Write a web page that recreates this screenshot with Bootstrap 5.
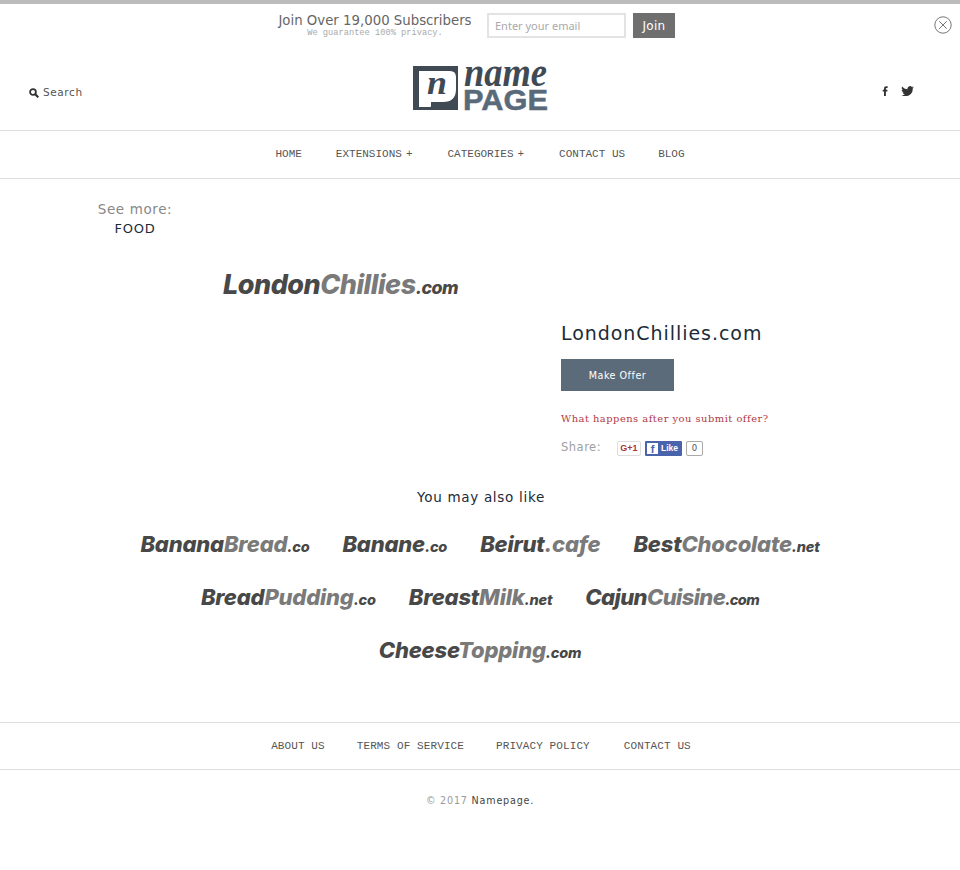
<!DOCTYPE html>
<html lang="en"><head><meta charset="utf-8"><title>LondonChillies.com</title>
<link rel="stylesheet" href="https://cdn.jsdelivr.net/npm/bootstrap@5.3.0/dist/css/bootstrap.min.css">
<style>
body{font-family:"DejaVu Sans",sans-serif;color:#1c2b39;background:#fff;height:870px;overflow:hidden}
.topline{height:4px;background:#bcbcbc}
.subbar{height:38px;padding:9px 7px 0 0;position:relative}
.subtext{width:194px;margin-right:15px;text-align:center}
.subhead{font-size:13.3px;line-height:16px;color:#666;white-space:nowrap}
.subnote{font-family:"Liberation Mono",monospace;font-size:8.7px;line-height:9px;color:#aaa;white-space:nowrap}
.subinput{width:139px;height:25px;border:2px solid #e3e3e3;font:11px/19px "Noto Sans",sans-serif;color:#999;padding:0 6px;margin-right:7px;display:flex;align-items:center;background:#fff}
.subinput::placeholder{color:#aaa}
.subbtn{width:42px;height:25px;background:#6f6f6f;color:#fff;font-size:12px;border:0;border-radius:0;padding:0;letter-spacing:.3px}
.closer{position:absolute;right:8px;top:12px;width:18px;height:18px}
.headrow{height:88px;padding:14px 29px 0 29px}
.srch{font-size:10.5px;letter-spacing:.6px;color:#555;width:130px}
.socials{width:130px;padding-right:17px;margin-bottom:4px}
.brand{width:136px;height:96px;margin-top:-35px;margin-bottom:-25px}
.mainnav{height:49px;border-top:1px solid #ddd;border-bottom:1px solid #ddd}
.mono{font-family:"Liberation Mono",monospace;font-size:11px;color:#555;text-decoration:none;white-space:nowrap}
.plusmark{margin-left:4px}
.mainnav a:nth-child(1){margin-right:34px}
.mainnav a:nth-child(2),.mainnav a:nth-child(3){margin-right:35px}
.mainnav a:nth-child(4){margin-right:33px}
.footnav{padding-left:2px}
.footnav .mono{letter-spacing:.1px}
.footnav a:nth-child(1),.footnav a:nth-child(2){margin-right:32px}
.footnav a:nth-child(3){margin-right:34px}
.seemore{width:76px;margin:21px 0 0 97px;text-align:center}
.seelabel{font-size:13.5px;line-height:19px;color:#888;letter-spacing:.6px;white-space:nowrap}
.seefood{font-size:13px;line-height:20px;color:#1c2b39;letter-spacing:.7px}
.mainrow{height:231px}
.leftlogo{width:561px;padding:32px 0 0 223px}
.lchead{font-size:19px;line-height:24px;letter-spacing:.95px;margin:82px 0 14px;color:#1c2b39}
.offerbtn{width:113px;height:32px;background:#5c6b79;color:#fff;font-size:9.6px;letter-spacing:.5px;border:0;border-radius:0;padding:3px 0 0;display:block}
.whatlink{font-family:"DejaVu Serif",serif;font-size:9.9px;color:#b13a3f;text-decoration:none;letter-spacing:.5px;display:block;margin-top:21px;line-height:14px}
.sharerow{margin-top:14px;height:16px}
.sharelabel{font-size:11.5px;color:#a0a0a0;letter-spacing:.5px;width:56px}
.gplus{width:24px;height:15px;border:1px solid #ddd;border-radius:2px;font:700 9px/13px "Liberation Sans",sans-serif;color:#a33;text-align:center;margin-right:4px}
.fblike{width:37px;height:15px;background:#4a63ad;border-radius:1px;color:#fff;font:700 8.5px/14px "Liberation Sans",sans-serif;gap:3px;padding-left:2px}
.ff{width:11px;height:11px;background:#fff;color:#4a63ad;font:700 11px/12px "Liberation Sans",sans-serif;text-align:center;display:block}
.fbcount{width:17px;height:15px;border:1px solid #aaa;border-radius:2px;font-size:8.5px;line-height:13px;text-align:center;color:#555;margin-left:4px}
.alsolike{font-size:13.5px;line-height:18px;letter-spacing:.7px;text-align:center;margin:18px 0 0;padding-left:2px;color:#1c2b39;font-weight:400}
.wordmark{font-family:"Inter",sans-serif;font-weight:800;font-style:italic;line-height:28px;white-space:nowrap;color:#484848;text-decoration:none;display:block}
.wordmark span{color:#7a7a7a}
.wordmark small{font-size:.66em;color:#484848;font-weight:800}
.bigmark{font-size:27px;letter-spacing:-.5px}
.lgmark{font-size:22px;letter-spacing:-.2px}
.cjmark{letter-spacing:-.6px}
.logorow{height:53px;gap:33px}
.logos{margin-top:24px;height:192px}
.footnav{height:48px;border-top:1px solid #ddd;border-bottom:1px solid #ddd}
.copy{font-size:9.6px;color:#999;letter-spacing:.8px;text-align:center;margin-top:24px;line-height:14px}
.copy a{color:#444;text-decoration:none}
</style></head><body>
<div class="topline"></div>
<div class="subbar d-flex justify-content-center align-items-start">
 <div class="subtext"><div class="subhead">Join Over 19,000 Subscribers</div><div class="subnote">We guarantee 100% privacy.</div></div>
 <input class="subinput" type="text" placeholder="Enter your email" aria-label="Email">
 <button class="btn subbtn">Join</button>
 <svg class="closer" viewBox="0 0 18 18" fill="none" stroke="#777"><circle cx="9" cy="9" r="8.2"/><path d="M5.2 5.2l7.6 7.6M12.8 5.2l-7.6 7.6"/></svg>
</div>
<div class="headrow d-flex justify-content-between align-items-center">
 <div class="srch d-flex align-items-center"><svg width="10" height="10" viewBox="0 0 10 10" fill="none" stroke="#333" stroke-width="1.8" class="me-1"><circle cx="4" cy="4" r="2.9"/><path d="M6.2 6.2L9.3 9.3" stroke-width="2.2"/></svg>Search</div>
 <svg class="brand" viewBox="0 -25 136 96" role="img" aria-label="name PAGE">
  <path fill="#3f4a55" d="M1 1h45v44H1z"/>
  <path fill="#fff" d="M7 6h31q6 0 6 6v12q0 13-13 13H19v4q0 1-1 1H7z"/>
  <text x="15" y="29" font-family="Liberation Serif" font-style="italic" font-weight="700" font-size="34" fill="#3f4a55" textLength="20" lengthAdjust="spacingAndGlyphs">n</text>
  <text x="52" y="21" font-family="Liberation Serif" font-style="italic" font-weight="700" font-size="40" fill="#3f4a55" textLength="83" lengthAdjust="spacingAndGlyphs">name</text>
  <text x="51" y="44.500" font-family="Liberation Sans" font-weight="700" font-size="30" fill="#596b7b" stroke="#596b7b" stroke-width=".5" textLength="85" lengthAdjust="spacingAndGlyphs">PAGE</text>
 </svg>
 <div class="socials d-flex justify-content-end align-items-center gap-2">
  <svg width="7" height="10" viewBox="0 0 7 10" fill="#333" class="me-1"><path d="M2 10V5.500H.7V3.800H2V2.600C2 1 2.900.2 4.300.2H5.600V1.900H4.700C4.100 1.900 3.900 2.200 3.900 2.700V3.800H5.500L5.300 5.500H3.900V10z"/></svg>
  <svg width="13" height="10" viewBox="0 0 13 10" fill="#333"><path d="M12.800 1.300c-.5.200-1 .4-1.500.4.500-.3 1-.8 1.200-1.400-.5.300-1 .5-1.600.6A2.600 2.600 0 0 0 6.500 3.300C4.300 3.200 2.400 2.100 1.100.600c-.7 1.200-.4 2.700.8 3.500-.4 0-.8-.1-1.200-.3 0 1.300.9 2.400 2.100 2.600-.4.100-.8.100-1.200 0 .3 1 1.300 1.800 2.500 1.800C3 8.800 1.500 9.300.1 9.100 5 12 12 9 11.700 2.500c.5-.3.800-.7 1.100-1.200z"/></svg>
 </div>
</div>
<nav class="mainnav d-flex justify-content-center align-items-center" aria-label="Main">
 <a class="mono" href="#">HOME</a>
 <a class="mono" href="#">EXTENSIONS<span class="plusmark">+</span></a>
 <a class="mono" href="#">CATEGORIES<span class="plusmark">+</span></a>
 <a class="mono" href="#">CONTACT US</a>
 <a class="mono" href="#">BLOG</a>
</nav>
<div class="seemore"><div class="seelabel">See more:</div><div class="seefood">FOOD</div></div>
<div class="mainrow d-flex">
 <div class="leftlogo"><a class="wordmark bigmark" href="#">London<span>Chillies</span><small>.com</small></a></div>
 <div>
  <h1 class="lchead fw-normal">LondonChillies.com</h1>
  <button class="btn offerbtn">Make Offer</button>
  <a class="whatlink" href="#">What happens after you submit offer?</a>
  <div class="sharerow d-flex align-items-center">
   <div class="sharelabel">Share:</div>
   <div class="gplus">G+1</div>
   <div class="fblike d-flex align-items-center"><i class="ff fst-normal">f</i>Like</div>
   <div class="fbcount">0</div>
  </div>
 </div>
</div>
<h2 class="alsolike">You may also like</h2>
<div class="logos">
 <div class="logorow d-flex justify-content-center">
  <a class="wordmark lgmark" href="#">Banana<span>Bread</span><small>.co</small></a>
  <a class="wordmark lgmark" href="#">Banane<small>.co</small></a>
  <a class="wordmark lgmark" href="#">Beirut<span>.cafe</span></a>
  <a class="wordmark lgmark" href="#">Best<span>Chocolate</span><small>.net</small></a>
 </div>
 <div class="logorow d-flex justify-content-center">
  <a class="wordmark lgmark" href="#">Bread<span>Pudding</span><small>.co</small></a>
  <a class="wordmark lgmark" href="#">Breast<span>Milk</span><small>.net</small></a>
  <a class="wordmark lgmark cjmark" href="#">Cajun<span>Cuisine</span><small>.com</small></a>
 </div>
 <div class="logorow d-flex justify-content-center">
  <a class="wordmark lgmark" href="#">Cheese<span>Topping</span><small>.com</small></a>
 </div>
</div>
<footer>
 <nav class="footnav d-flex justify-content-center align-items-center" aria-label="Footer">
  <a class="mono" href="#">ABOUT US</a>
  <a class="mono" href="#">TERMS OF SERVICE</a>
  <a class="mono" href="#">PRIVACY POLICY</a>
  <a class="mono" href="#">CONTACT US</a>
 </nav>
 <div class="copy">© 2017 <a href="#">Namepage.</a></div>
</footer>
<script src="https://cdn.jsdelivr.net/npm/bootstrap@5.3.0/dist/js/bootstrap.bundle.min.js"></script>
</body></html>
